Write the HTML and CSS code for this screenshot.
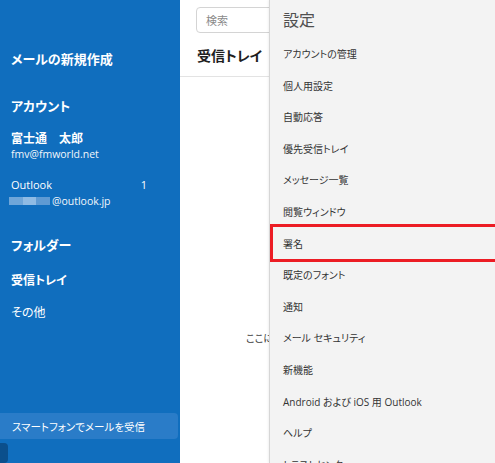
FILE: index.html
```html
<!DOCTYPE html>
<html lang="ja">
<head>
<meta charset="utf-8">
<title>Outlook 設定</title>
<link rel="stylesheet" href="styles.css">
</head>
<body>
<div class="app">
  <aside class="sidebar">
    <div class="compose">メールの新規作成</div>
    <div class="section-title accounts">アカウント</div>
    <div class="acct-name">富士通　太郎</div>
    <div class="acct-mail">fmv@fmworld.net</div>
    <div class="acct-row"><span>Outlook</span><span>1</span></div>
    <div class="acct-mail second"><span class="blur"><i></i><i class="b2"></i><i class="b3"></i></span>@outlook.jp</div>
    <div class="section-title folders">フォルダー</div>
    <div class="folder inbox">受信トレイ</div>
    <div class="folder other">その他</div>
    <div class="phone-btn">スマートフォンでメールを受信</div>
    <div class="stub"></div>
  </aside>
  <main class="main">
    <div class="search-wrap"><div class="search">検索</div></div>
    <div class="list-head">受信トレイ</div>
    <div class="empty">ここにはアイテムがありません</div>
  </main>
  <section class="settings">
    <div class="settings-title">設定</div>
    <ul class="settings-list">
      <li>アカウントの管理</li>
      <li>個人用設定</li>
      <li>自動応答</li>
      <li>優先受信トレイ</li>
      <li>メッセージ一覧</li>
      <li>閲覧ウィンドウ</li>
      <li>署名</li>
      <li>既定のフォント</li>
      <li>通知</li>
      <li>メール セキュリティ</li>
      <li>新機能</li>
      <li>Android および iOS 用 Outlook</li>
      <li>ヘルプ</li>
      <li>トラストセンター</li>
    </ul>
    <div class="highlight"></div>
  </section>
</div>
</body>
</html>
```
FILE: styles.css
```css
* { box-sizing: border-box; }
html, body { margin: 0; padding: 0; }
body {
  width: 495px;
  height: 463px;
  overflow: hidden;
  font-family: "Segoe UI", "Open Sans", "Noto Sans CJK JP", sans-serif;
  font-feature-settings: "palt";
  background: #ffffff;
}
.app {
  position: relative;
  display: flex;
  width: 495px;
  height: 463px;
  overflow: hidden;
}
.sidebar {
  width: 180px;
  flex: 0 0 180px;
  background: #106ebe;
  color: #ffffff;
  display: flex;
  flex-direction: column;
  padding-left: 11px;
  overflow: hidden;
}
.compose {
  margin-top: 50px;
  font-size: 13px;
  line-height: 18px;
  font-weight: 700;
}
.section-title {
  font-size: 13px;
  line-height: 18px;
  font-weight: 700;
}
.accounts { margin-top: 29px; }
.acct-name {
  margin-top: 16px;
  font-size: 12px;
  line-height: 16px;
  font-weight: 700;
}
.acct-mail {
  font-size: 10.5px;
  line-height: 14px;
  color: #f2f6fb;
}
.acct-mail.second {
  margin-top: 1px;
  display: flex;
  align-items: center;
}
.blur {
  display: flex;
  width: 41px;
  height: 8px;
  margin-left: -2px;
  margin-right: 2px;
}
.blur i {
  flex: 1;
  background: #6fa6d9;
}
.blur i.b2 { background: #8fbbe4; }
.blur i.b3 { background: #5e9ad3; }
.acct-row {
  margin-top: 16px;
  display: flex;
  justify-content: space-between;
  padding-right: 33px;
  font-size: 11px;
  line-height: 16px;
}
.folders { margin-top: 28px; }
.folder {
  font-size: 12px;
  line-height: 16px;
}
.inbox { margin-top: 19px; font-weight: 700; }
.other { margin-top: 16px; }
.phone-btn {
  margin-top: 92px;
  margin-left: -11px;
  margin-right: 2px;
  height: 38px;
  background: #2a7cc8;
  border-radius: 0 4px 4px 0;
  display: flex;
  align-items: center;
  padding-left: 12px;
  font-size: 10.5px;
}
.stub {
  margin-top: 4px;
  margin-left: -11px;
  width: 8px;
  height: 20px;
  border-radius: 0 4px 4px 0;
  background: #0b4f8c;
  flex: 0 0 auto;
}
.main {
  flex: 1;
  display: flex;
  flex-direction: column;
  background: #ffffff;
}
.search-wrap {
  padding: 7px 0 0 16px;
}
.search {
  height: 26px;
  width: 200px;
  border: 1px solid #d4d4d4;
  border-radius: 4px;
  font-size: 11px;
  color: #8a8a8a;
  display: flex;
  align-items: center;
  padding-left: 9px;
}
.list-head {
  margin-top: 13px;
  padding: 0 16px 10px 17px;
  font-size: 14px;
  line-height: 20px;
  font-weight: 700;
  color: #1f1f1f;
  border-bottom: 1px solid #e3e3e3;
}
.empty {
  margin-top: 253px;
  padding-left: 66px;
  font-size: 10px;
  line-height: 16px;
  color: #404040;
  white-space: nowrap;
}
.settings {
  position: absolute;
  top: 0;
  right: 0;
  bottom: 0;
  width: 226px;
  background: #f3f3f3;
  border-left: 1px solid #d6d6d6;
  box-shadow: -1px 0 2px rgba(0,0,0,0.06);
  padding-left: 13px;
}
.settings-title {
  margin-top: 9px;
  font-size: 16px;
  line-height: 22px;
  color: #505050;
}
.settings-list {
  list-style: none;
  margin: 8px 0 0;
  padding: 0;
}
.settings-list li {
  height: 31.6px;
  line-height: 31.6px;
  font-size: 10px;
  color: #333333;
  white-space: nowrap;
}
.highlight {
  position: absolute;
  top: 224px;
  left: 0;
  right: -10px;
  height: 38px;
  border: 3px solid #ec1c24;
}
```
